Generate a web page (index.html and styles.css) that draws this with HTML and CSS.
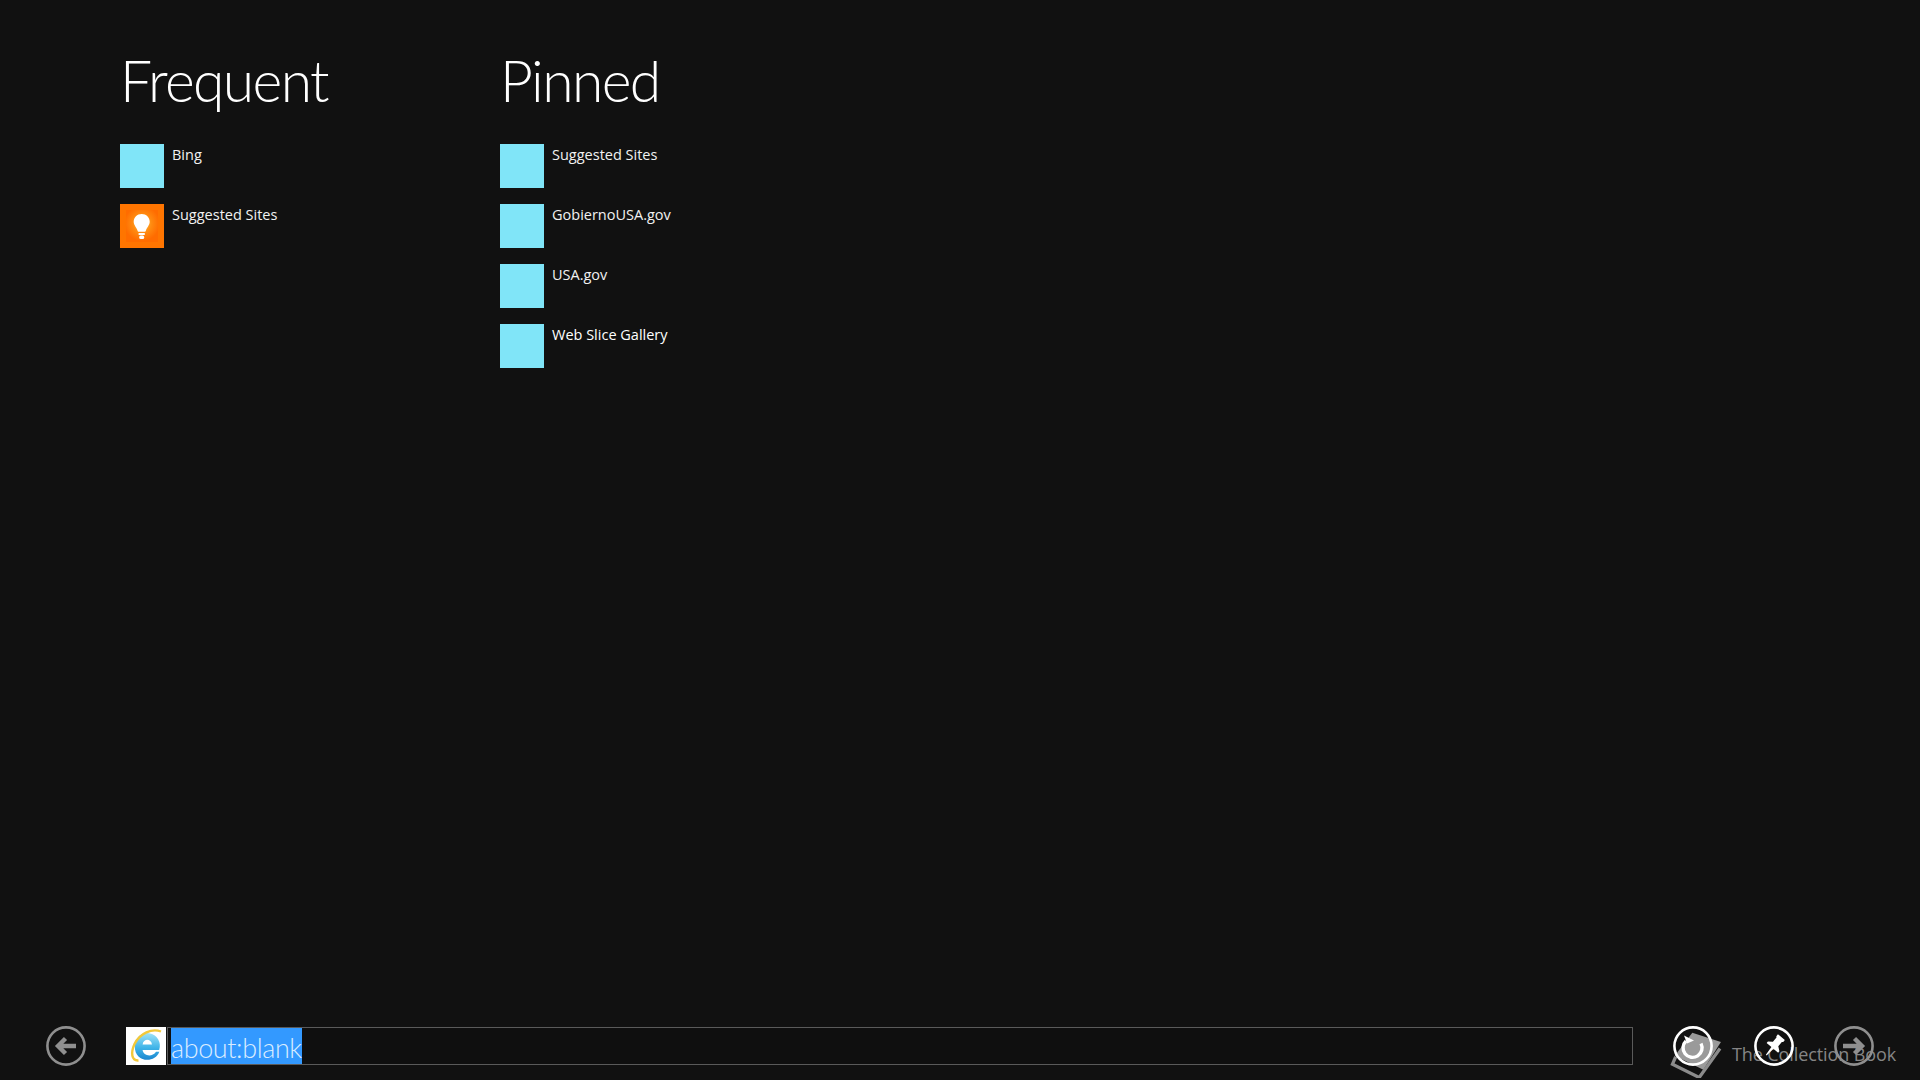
FILE: index.html
```html
<!DOCTYPE html>
<html lang="en">
<head>
<meta charset="utf-8">
<title>about:blank</title>
<link rel="stylesheet" href="styles.css">
</head>
<body>
<div class="page">
  <main class="columns">
    <section class="column">
      <h2 class="heading">Frequent</h2>
      <ul class="list">
        <li class="item"><span class="tile"></span><span class="label">Bing</span></li>
        <li class="item">
          <svg class="tile-svg" viewBox="0 0 44 44" width="44" height="44" aria-hidden="true">
            <defs>
              <radialGradient id="glow" cx="0.5" cy="0.42" r="0.55">
                <stop offset="0" stop-color="#ffc040"/>
                <stop offset="0.55" stop-color="#ff8a10"/>
                <stop offset="1" stop-color="#ff6c00"/>
              </radialGradient>
            </defs>
            <rect width="44" height="44" fill="#ff7500"/>
            <rect x="6" y="6" width="32" height="32" fill="url(#glow)"/>
            <path d="M21.700 10c-4.600 0-8 3.500-8 7.800 0 3.600 3.100 6 3.800 8.600.2.800.5 1.400 1.400 1.400h5.600c.9 0 1.200-.6 1.400-1.400.7-2.600 3.800-5 3.800-8.600 0-4.300-3.400-7.800-8-7.800z" fill="#fff"/>
            <rect x="18.600" y="29" width="6.200" height="2" fill="#fff"/>
            <rect x="19.200" y="31.600" width="5" height="3.400" rx="1.500" fill="#fff"/>
          </svg>
          <span class="label">Suggested Sites</span>
        </li>
      </ul>
    </section>
    <section class="column">
      <h2 class="heading">Pinned</h2>
      <ul class="list">
        <li class="item"><span class="tile"></span><span class="label">Suggested Sites</span></li>
        <li class="item"><span class="tile"></span><span class="label">GobiernoUSA.gov</span></li>
        <li class="item"><span class="tile"></span><span class="label">USA.gov</span></li>
        <li class="item"><span class="tile"></span><span class="label label-strong">Web Slice Gallery</span></li>
      </ul>
    </section>
  </main>

  <footer class="toolbar">
    <button class="round muted" aria-label="Back">
      <svg viewBox="0 0 40 40" width="40" height="40" aria-hidden="true">
        <circle cx="20" cy="20" r="18.600" fill="none" stroke="currentColor" stroke-width="2.600"/>
        <path d="M30 20H12M19.500 12.500L12 20l7.500 7.500" fill="none" stroke="currentColor" stroke-width="4.400"/>
      </svg>
    </button>
    <div class="address">
      <span class="favicon">
        <svg viewBox="0 0 40 38" width="40" height="38" aria-hidden="true">
          <defs>
            <linearGradient id="ieblue" x1="0" y1="0" x2="0" y2="1">
              <stop offset="0" stop-color="#9fe2f7"/>
              <stop offset="0.55" stop-color="#3fb4e8"/>
              <stop offset="1" stop-color="#1a86cf"/>
            </linearGradient>
          </defs>
          <g transform="translate(21 19.500) scale(1.160) translate(-21 -19)">
            <path d="M10.500 18.500a10.800 11 0 1 1 21 3.500H17.200c.6 5 8 6.800 11.600 1.500h2.800c-3.800 10.500-21.600 9.400-21.100-5zm6.700-1.300h8.100c-.8-5.300-7.300-5.300-8.100 0z" fill="url(#ieblue)" fill-rule="evenodd"/>
          </g>
          <path d="M35 4.500C26 1 14 6 8.500 17 4.500 26 5.500 34 12.500 33.500" fill="none" stroke="#f2c83a" stroke-width="2.400"/>
        </svg>
      </span>
      <div class="field"><span class="selected">about:blank</span></div>
    </div>
    <div class="actions">
      <button class="round" aria-label="Refresh">
        <svg viewBox="0 0 40 40" width="40" height="40" aria-hidden="true">
          <circle cx="20" cy="20" r="18.600" fill="none" stroke="currentColor" stroke-width="2.600"/>
          <path d="M13 15a9.500 9.500 0 1 0 15 2.500" fill="none" stroke="currentColor" stroke-width="3.400"/>
          <path d="M11 9.500l3 8 7-3z" fill="currentColor"/>
        </svg>
      </button>
      <button class="round" aria-label="Pin">
        <svg viewBox="0 0 40 40" width="40" height="40" aria-hidden="true">
          <circle cx="20" cy="20" r="18.600" fill="none" stroke="currentColor" stroke-width="2.600"/>
          <path transform="rotate(40 20 20)" d="M15.500 8.500h9v2.500l-1 1v5.500l4 3V22.500h-6.200L20.500 32h-1l-.8-9.500H12.500v-2l4-3V12l-1-1z" fill="currentColor"/>
        </svg>
      </button>
      <button class="round muted" aria-label="Forward">
        <svg viewBox="0 0 40 40" width="40" height="40" aria-hidden="true">
          <circle cx="20" cy="20" r="18.600" fill="none" stroke="currentColor" stroke-width="2.600"/>
          <path d="M9 20h18M20.500 12.500L28 20l-7.500 7.500" fill="none" stroke="currentColor" stroke-width="4.400"/>
        </svg>
      </button>
    </div>
  </footer>

  <div class="watermark">
    <svg class="book" viewBox="0 0 56 52" width="52" height="48" aria-hidden="true">
      <path d="M24 3l31 10-19 30L5 28z" fill="#9a9a9a"/>
      <path d="M6 29l-3.500 8 29 14.500L54 20" fill="none" stroke="#8c8c8c" stroke-width="3.500"/>
    </svg>
    <span class="mark-text">The Collection Book</span>
  </div>
</div>
</body>
</html>
```

FILE: styles.css
```css
* {
  box-sizing: border-box;
}

html,
body {
  margin: 0;
  height: 100%;
  background: #111111;
}

body {
  font-family: "Open Sans", "Liberation Sans", sans-serif;
  color: #ffffff;
  overflow: hidden;
}

.page {
  position: relative;
  display: flex;
  flex-direction: column;
  height: 100vh;
}

.columns {
  flex: 1;
  display: flex;
  padding: 42px 0 0 120px;
}

.column {
  width: 380px;
}

.heading {
  margin: 0 0 26px;
  height: 76px;
  font-family: "Lato", "Open Sans", sans-serif;
  font-size: 57px;
  line-height: 76px;
  font-weight: 300;
  letter-spacing: -1.600px;
  color: #ffffff;
}

.list {
  list-style: none;
  margin: 0;
  padding: 0;
  display: flex;
  flex-direction: column;
  gap: 16px;
}

.item {
  display: flex;
  align-items: flex-start;
  gap: 8px;
  height: 44px;
}

.tile {
  display: block;
  flex: none;
  width: 44px;
  height: 44px;
  background: #80e5f8;
}

.tile-svg {
  display: block;
  flex: none;
}

.label {
  font-size: 14.500px;
  line-height: 20px;
  margin-top: 1px;
  color: #f2f2f2;
}

.label-strong {
  color: #ffffff;
  font-weight: 500;
}

.toolbar {
  position: relative;
  z-index: 1;
  display: flex;
  align-items: center;
  height: 40px;
  margin-bottom: 14px;
  padding: 0 46px;
}

.round {
  display: block;
  flex: none;
  width: 40px;
  height: 40px;
  padding: 0;
  border: 0;
  background: none;
  color: #ffffff;
}

.round svg {
  display: block;
}

.muted {
  color: #8f8f8f;
}

.address {
  flex: 1;
  display: flex;
  align-items: flex-start;
  height: 38px;
  margin: 0 40px;
}

.favicon {
  display: block;
  flex: none;
  width: 40px;
  height: 38px;
  background: #ffffff;
}

.favicon svg {
  display: block;
}

.field {
  flex: 1;
  height: 38px;
  margin-left: 1px;
  padding-left: 3px;
  border: 1px solid #5a5a5a;
  background: #0f0f0f;
  display: flex;
  align-items: stretch;
}

.selected {
  display: block;
  background: #3399ff;
  color: #d9ecff;
  font-family: "Lato", "Open Sans", sans-serif;
  font-size: 27px;
  font-weight: 300;
  letter-spacing: -0.400px;
  line-height: 40px;
  height: 36px;
}

.actions {
  display: flex;
  gap: 40.500px;
  flex: none;
}

.watermark {
  position: absolute;
  left: 1670px;
  top: 1030px;
  display: flex;
  align-items: flex-start;
}

.book {
  display: block;
  flex: none;
}

.mark-text {
  margin: 11px 0 0 10px;
  font-size: 18px;
  line-height: 26px;
  font-weight: 400;
  letter-spacing: -0.100px;
  color: #858585;
  white-space: nowrap;
}
```
